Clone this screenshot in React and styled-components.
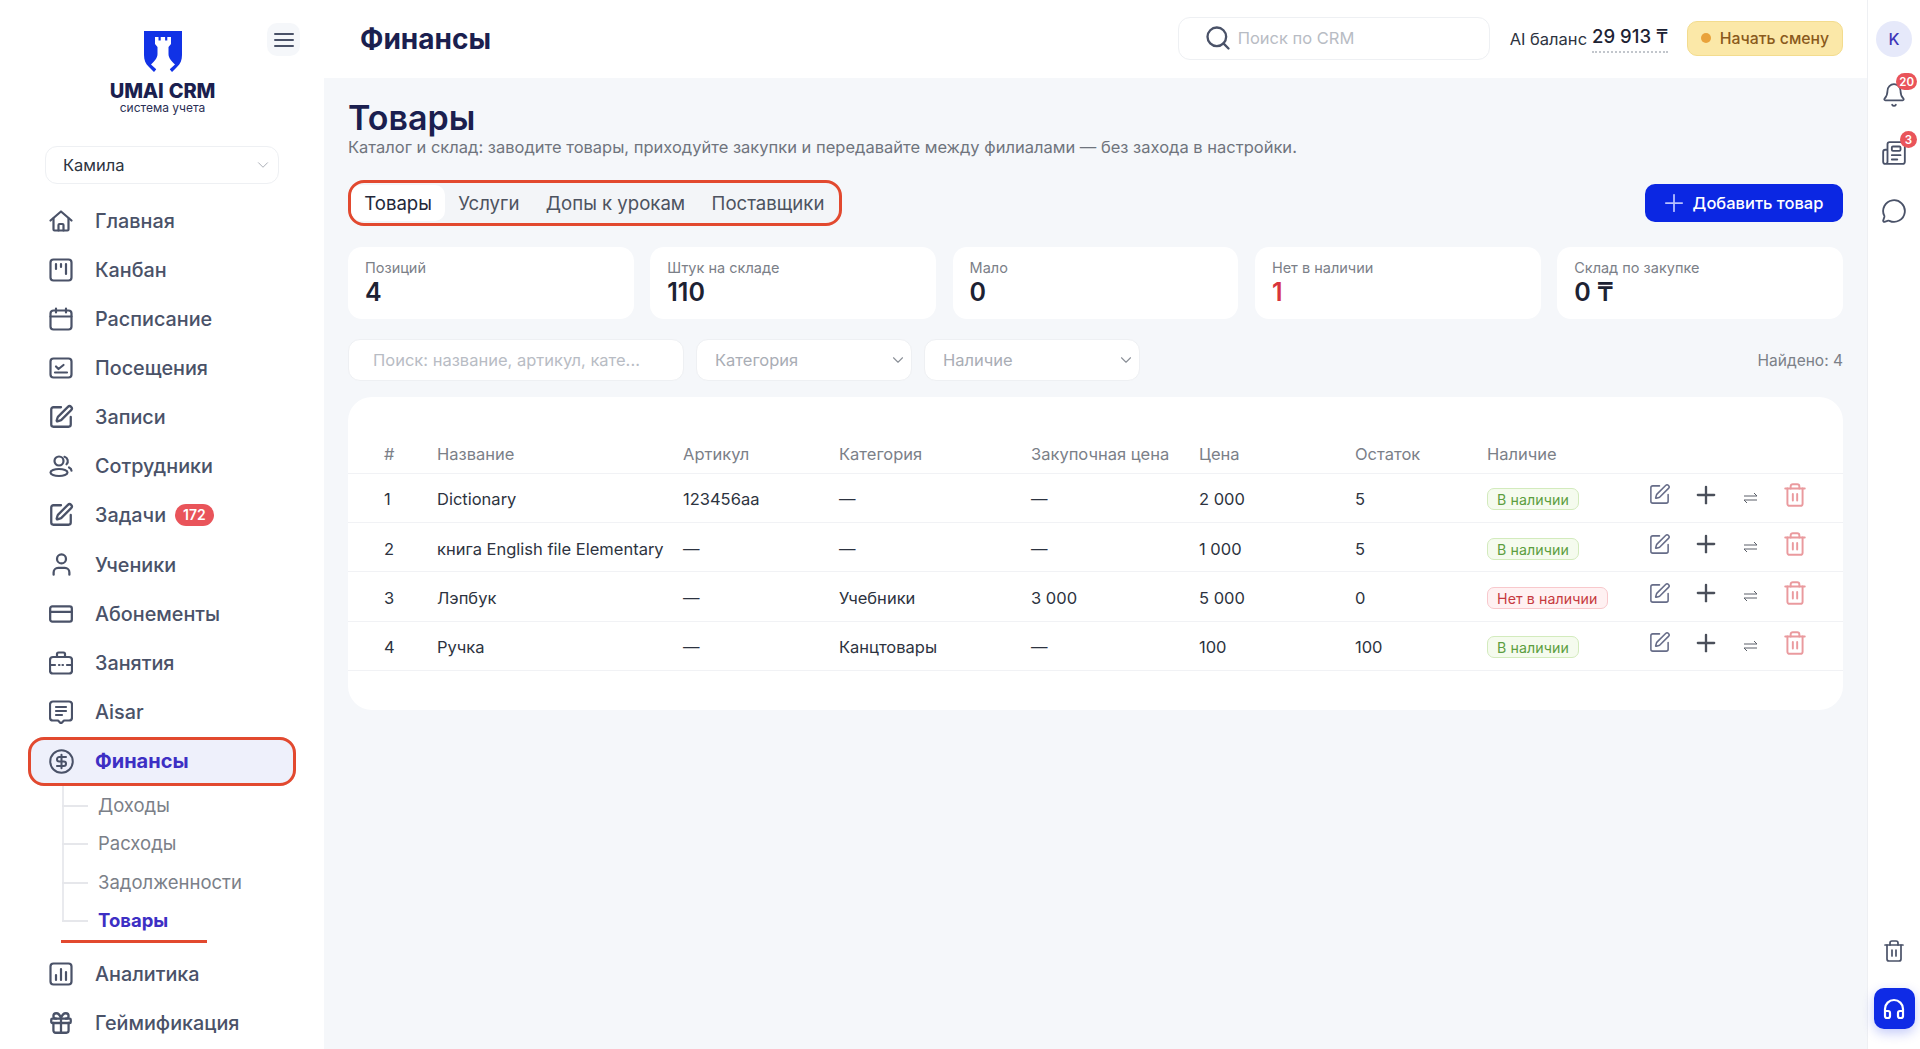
import React from "react";
import styled, { createGlobalStyle } from "styled-components";
import { Gift, User, CreditCard, SquarePen, CircleDollarSign, Bell, Newspaper, MessageCircle, Trash2, Headphones, Plus, Search, ChevronDown } from "lucide-react";

const Global = createGlobalStyle`
  html, body { margin: 0; padding: 0; height: 100%; overflow: hidden; }
  body { font-family: Inter, "Noto Sans", "DejaVu Sans", sans-serif; background: #fff; -webkit-font-smoothing: antialiased; }
  * { box-sizing: border-box; }
`;

const Page = styled.div`display: flex; width: 1920px; height: 1049px; overflow: hidden; background: #fff;`;
const Sidebar = styled.aside`width: 324px; flex: none; background: #fff; padding: 0 28px 0 28px; position: relative; overflow: hidden;`;
const LogoBlock = styled.div`display: flex; flex-direction: column; align-items: center; padding-top: 31px; height: 146px; padding-left: 1px;`;
const LogoName = styled.div`font-size: 20px; font-weight: 800; color: #1b1f4f; line-height: 22px; margin-top: 8px; letter-spacing: -.2px; word-spacing: 1px;`;
const LogoSub = styled.div`font-size: 12px; color: #2b2f55; line-height: 14px; margin-top: -1px;`;
const MenuBtn = styled.button`position: absolute; left: 267px; top: 23px; width: 33px; height: 33px; border: 0; border-radius: 10px; background: #f5f7fa; display: flex; align-items: center; justify-content: center; padding: 0; color: #4a5268;`;
const BranchSelect = styled.div`margin: 0 17px; height: 38px; width: 234px; border: 1px solid #eef0f3; border-radius: 12px; display: flex; align-items: center; justify-content: space-between; padding: 0 6px 0 17px; font-size: 16.5px; color: #2d3340;`;
const Nav = styled.nav`margin-top: 12px;`;
const NavRow = styled.div`
  height: 49.15px; display: flex; align-items: center; gap: 22px; padding-left: 21px;
  font-size: ${p => p.$active ? 20 : 19.8}px; font-weight: ${p => p.$active ? 700 : 500}; color: ${p => p.$active ? "#3d2fc4" : "#4a5268"};
  background: ${p => p.$active ? "#eef0fb" : "transparent"}; border-radius: 16px;
  ${p => p.$active ? "outline: 3px solid #e2492f; outline-offset: -3px;" : ""}
  svg { flex: none; color: #4a5268; }
`;
const IconSlot = styled.span`width: 24px; height: 24px; display: flex; align-items: center; justify-content: center; flex: none;`;
const CountBadge = styled.span`background: #e9545a; color: #fff; font-size: 14px; font-weight: 600; height: 22px; line-height: 22px; border-radius: 11px; padding: 0 8px; margin-left: -13px;`;
const SubList = styled.div`
  position: relative; padding-left: 70px;
  &::before { content: ""; position: absolute; left: 34px; top: 0; bottom: 19px; width: 2px; background: #e9eaee; }
`;
const SubItem = styled.div`
  position: relative; height: 38.5px; display: flex; align-items: center; font-size: 18.5px;
  font-weight: ${p => p.$active ? 700 : 400}; color: ${p => p.$active ? "#3d2fc4" : "#7b8088"};
  &::before { content: ""; position: absolute; left: -36px; top: 50%; width: 26px; height: 2px; background: #e6e7eb; }
`;
const RedLine = styled.div`height: 3px; width: 146px; margin-left: 33px; background: #e2492f; margin-bottom: 7px;`;

const Column = styled.div`flex: 1; min-width: 0; display: flex; flex-direction: column;`;
const Topbar = styled.header`height: 78px; flex: none; background: #fff; display: flex; align-items: center; padding: 0 24px 0 36px;`;
const PageName = styled.div`font-size: 28px; font-weight: 700; color: #1b1f4f; flex: 1;`;
const TopSearch = styled.div`width: 312px; height: 43px; margin-top: -2px; border: 1px solid #eef0f3; border-radius: 12px; display: flex; align-items: center; gap: 6px; padding-left: 25px; font-size: 16.5px; color: #b8bcc4; svg { color: #4a5268; }`;
const Balance = styled.div`margin-left: 20px; display: flex; align-items: center; gap: 5px; font-size: 16.5px; color: #2d3340;`;
const BalanceValue = styled.span`font-size: 18.5px; font-weight: 500; color: #1d2233; border-bottom: 2px dotted #c2c6cc; padding-bottom: 4px; margin-top: -1px;`;
const ShiftBtn = styled.button`margin-left: 19px; margin-top: -2px; width: 156px; height: 35px; background: #fbe8a8; border: 1px solid #f3dc8e; border-radius: 10px; display: flex; align-items: center; justify-content: center; gap: 9px; font: 500 15.8px Inter, sans-serif; color: #8a5a1c;`;
const Dot = styled.span`width: 10px; height: 10px; border-radius: 50%; background: #e9a23b;`;

const Main = styled.main`flex: 1; background: #f5f7fa; padding: 20px 24px 0 24px; overflow: hidden;`;
const Title = styled.h1`margin: 0; font-size: 34px; line-height: 39px; font-weight: 600; color: #1b1f4f;`;
const Subtitle = styled.p`margin: 0; font-size: 16.5px; line-height: 20px; color: #6f747d;`;
const ActionRow = styled.div`display: flex; justify-content: space-between; align-items: center; margin-top: 23px;`;
const Tabs = styled.div`display: flex; align-items: stretch; height: 46px; width: 494px; background: #f3f5f8; border: 3px solid #e2492f; border-radius: 16px; padding: 2px 0; overflow: hidden;`;
const Tab = styled.div`display: flex; align-items: center; padding: 0 13.2px; font-size: 18.6px; white-space: nowrap; border-radius: 10px; color: ${p => p.$active ? "#23283a" : "#4d5360"}; background: ${p => p.$active ? "#fff" : "transparent"};`;
const AddBtn = styled.button`width: 198px; height: 38px; background: #0b27e3; color: #fff; border: 0; border-radius: 10px; font: 500 16.5px Inter, sans-serif; display: flex; align-items: center; justify-content: center; gap: 5px; padding: 0 5px 0 0; svg { color: #b9c2ff; }`;
const Stats = styled.div`display: grid; grid-template-columns: repeat(5, 1fr); gap: 16.5px; margin-top: 21px;`;
const StatCard = styled.div`height: 72px; background: #fff; border-radius: 14px; padding: 12px 17px;`;
const StatLabel = styled.div`font-size: 14.5px; line-height: 17px; color: #7b8088;`;
const StatValue = styled.div`font-size: 25px; line-height: 31px; font-weight: 600; margin-top: 1px; color: ${p => p.$red ? "#d8343c" : "#1d2233"};`;
const Filters = styled.div`display: flex; align-items: center; gap: 12px; margin-top: 20px; height: 42px;`;
const FilterInput = styled.div`width: 336px; height: 42px; background: #fff; border: 1px solid #eef0f3; border-radius: 12px; padding-left: 24px; display: flex; align-items: center; font-size: 16.5px; color: #b8bcc4;`;
const FilterSelect = styled.div`width: 216px; height: 42px; background: #fff; border: 1px solid #eef0f3; border-radius: 12px; padding: 0 4px 0 18px; display: flex; align-items: center; justify-content: space-between; font-size: 16.5px; color: #a9adb5; svg { color: #8b9098; }`;
const Found = styled.div`margin-left: auto; font-size: 15.5px; color: #7b8088;`;
const TableCard = styled.section`margin-top: 16px; height: 313px; background: #fff; border-radius: 24px; padding-top: 37px;`;
const GridRow = styled.div`display: grid; grid-template-columns: 53px 246px 156px 192px 168px 156px 132px 163px 1fr; padding-left: 36px; align-items: center; border-bottom: 1px solid #f1f2f5;`;
const HeadRow = styled(GridRow)`height: 39.5px; padding-top: 1px; font-size: 16.5px; color: #7b8088;`;
const BodyRow = styled(GridRow)`height: 49.4px; padding-top: 3px; font-size: 16.5px; color: #2d3340;`;
const StockBadge = styled.span`
  display: inline-block; height: 22px; line-height: 21px; padding: 0 9px; border-radius: 7px; font-size: 14.2px; letter-spacing: .1px;
  background: ${p => p.$ok ? "#f5fbee" : "#fff1f2"}; color: ${p => p.$ok ? "#5c9e40" : "#c63a40"}; border: 1px solid ${p => p.$ok ? "#d3ebbd" : "#f8c8cc"};
`;
const Actions = styled.div`display: flex; align-items: center; margin-top: -9px; margin-left: -2px;`;
const ActionIcon = styled.span`display: flex; width: ${p => p.$w}px; justify-content: flex-start; color: ${p => p.$c}; ${p => p.$down ? "margin-top: 6px;" : ""}`;

const Rail = styled.aside`width: 53px; flex: none; border-left: 1px solid #eef0f3; background: #fff; display: flex; flex-direction: column; align-items: center; padding-top: 21px; color: #4a5268;`;
const Avatar = styled.div`width: 36px; height: 36px; border-radius: 50%; background: #e6e9fa; color: #3d35b8; display: flex; align-items: center; justify-content: center; font-size: 16px; font-weight: 500;`;
const RailIcon = styled.div`position: relative; height: ${p => p.$h}px; display: flex; align-items: flex-end; margin-top: ${p => p.$m}px;`;
const RailBadge = styled.span`position: absolute; right: ${p => p.$r}px; top: ${p => p.$t}px; min-width: 17px; height: 17px; border-radius: 9px; background: #e9545a; color: #fff; font-size: 11.5px; font-weight: 600; display: flex; align-items: center; justify-content: center; padding: 0 3px;`;
const Spacer = styled.div`flex: 1;`;
const SupportBtn = styled.button`width: 41px; height: 41px; border: 0; border-radius: 10px; background: #0f2be6; color: #fff; box-shadow: 0 4px 12px rgba(15,43,230,.25); display: flex; align-items: center; justify-content: center; padding: 0; margin: 25px 0 20px;`;

const Svg = ({ children, s = 24, w = 2.2 }) => (
  <svg width={s} height={s} viewBox="0 0 24 24" fill="none" stroke="currentColor" strokeWidth={w} strokeLinecap="round" strokeLinejoin="round">{children}</svg>
);
const HomeI = () => <Svg><path d="M1.500 11.500 12 2.500l10.500 9" /><path d="M4.500 9.500v11a1 1 0 0 0 1 1h13a1 1 0 0 0 1-1v-11" /><path d="M9.500 21.500V16a1 1 0 0 1 1-1h3a1 1 0 0 1 1 1v5.500" /></Svg>;
const KanbanI = () => <Svg><rect x="1.5" y="1.5" width="21" height="21" rx="3" /><path d="M7 6v5M12 6v3M17 6v10" /></Svg>;
const CalendarI = () => <Svg><rect x="1.5" y="3.5" width="21" height="19" rx="3" /><path d="M1.5 9.5h21M7 1.5v4M17 1.5v4" /></Svg>;
const AttendI = () => <Svg><rect x="1.5" y="2.5" width="21" height="19" rx="3" /><path d="M6 16.5h12M7 10.5l2.5 2.5 5-4" /></Svg>;
const StaffI = () => <Svg><circle cx="10" cy="7" r="4.5" /><ellipse cx="10" cy="18.5" rx="8.5" ry="3.5" /><path d="M15.5 2.8a4.5 4.5 0 0 1 2 7.5M20 13.5c1.5.8 2.5 2 2.5 3.2" /></Svg>;
const CaseI = () => <Svg><rect x="1" y="6" width="22" height="16.5" rx="3" /><path d="M8 6V3a1.5 1.5 0 0 1 1.5-1.5h5A1.5 1.5 0 0 1 16 3v3M1 14h5M18 14h5M10 14h.5M13.5 14h.5" /></Svg>;
const ChatI = () => <Svg><path d="M4 1.500h16a3 3 0 0 1 3 3v13a3 3 0 0 1-3 3h-5l-3 3-3-3H4a3 3 0 0 1-3-3v-13a3 3 0 0 1 3-3Z" /><path d="M7 7h10M7 11h10M7 15h6" /></Svg>;
const ChartI = () => <Svg><rect x="1.5" y="1.5" width="21" height="21" rx="3" /><path d="M7 18v-5M12 18V7M17 18v-8" /></Svg>;
const SwapI = () => <svg width="15" height="12" viewBox="0 0 15 12" fill="none" stroke="currentColor" strokeWidth="1"><path d="M1 4h13M14 4l-3-3M14 8H1M1 8l3 3" /></svg>;
const Logo = () => (
  <svg width="38" height="41" viewBox="0 0 38 41">
    <path fill="#1132e6" d="M0 0h38v24c0 5-1.5 9-5 12l-5 5-3-3.500-12 0-3 3.500-5-5C1.500 33 0 29 0 24Z" />
    <path fill="#fff" d="M11 6h3.500v3.500h2.200V6h4.400v3.500h2.200V6H27v7l-2.500 3v7c0 4 3 7 6.500 10.500L26 38l-1 3H13l-1-3-5-4.500C10.500 30 13.500 27 13.500 23v-7L11 13Z" />
  </svg>
);

const nav1 = [
  ["Главная", <HomeI />], ["Канбан", <KanbanI />], ["Расписание", <CalendarI />], ["Посещения", <AttendI />],
  ["Записи", <SquarePen size={26} strokeWidth={2.1} />], ["Сотрудники", <StaffI />], ["Задачи", <SquarePen size={26} strokeWidth={2.1} />, "172"],
  ["Ученики", <User size={27} strokeWidth={2} />], ["Абонементы", <CreditCard size={26} strokeWidth={2.1} />], ["Занятия", <CaseI />], ["Aisar", <ChatI />],
];
const subs = ["Доходы", "Расходы", "Задолженности", "Товары"];
const stats = [["Позиций", "4"], ["Штук на складе", "110"], ["Мало", "0"], ["Нет в наличии", "1", true], ["Склад по закупке", "0 ₸"]];
const head = ["#", "Название", "Артикул", "Категория", "Закупочная цена", "Цена", "Остаток", "Наличие", ""];
const rows = [
  ["1", "Dictionary", "123456aa", "—", "—", "2 000", "5", true],
  ["2", "книга English file Elementary", "—", "—", "—", "1 000", "5", true],
  ["3", "Лэпбук", "—", "Учебники", "3 000", "5 000", "0", false],
  ["4", "Ручка", "—", "Канцтовары", "—", "100", "100", true],
];
const tabs = [["Товары", true], ["Услуги"], ["Допы к урокам"], ["Поставщики"]];

function NavItem({ label, icon, count, active }) {
  return (
    <NavRow $active={active}>
      <IconSlot>{icon}</IconSlot>{label}{count && <CountBadge>{count}</CountBadge>}
    </NavRow>
  );
}

export default function App() {
  return (
    <Page>
      <Global />
      <Sidebar>
        <LogoBlock>
          <Logo />
          <LogoName>UMAI CRM</LogoName>
          <LogoSub>система учета</LogoSub>
        </LogoBlock>
        <MenuBtn>
          <svg width="20" height="14" viewBox="0 0 20 14" fill="none" stroke="currentColor" strokeWidth="2" strokeLinecap="round"><path d="M1 1h18M1 7h18M1 13h18" /></svg>
        </MenuBtn>
        <BranchSelect>Камила<ChevronDown size={18} color="#a9adb5" strokeWidth={1.3} /></BranchSelect>
        <Nav>
          {nav1.map(([l, i, c]) => <NavItem key={l} label={l} icon={i} count={c} />)}
          <NavItem active label="Финансы" icon={<CircleDollarSign size={27} strokeWidth={1.8} />} />
          <SubList>
            {subs.map((s, i) => <SubItem key={s} $active={i === 3}>{s}</SubItem>)}
          </SubList>
          <RedLine />
          <NavItem label="Аналитика" icon={<ChartI />} />
          <NavItem label="Геймификация" icon={<Gift size={26} strokeWidth={2.1} />} />
        </Nav>
      </Sidebar>
      <Column>
        <Topbar>
          <PageName>Финансы</PageName>
          <TopSearch><Search size={28} strokeWidth={2} />Поиск по CRM</TopSearch>
          <Balance>AI баланс <BalanceValue>29 913 ₸</BalanceValue></Balance>
          <ShiftBtn><Dot />Начать смену</ShiftBtn>
        </Topbar>
        <Main>
          <Title>Товары</Title>
          <Subtitle>Каталог и склад: заводите товары, приходуйте закупки и передавайте между филиалами — без захода в настройки.</Subtitle>
          <ActionRow>
            <Tabs>{tabs.map(([t, a]) => <Tab key={t} $active={a}>{t}</Tab>)}</Tabs>
            <AddBtn><Plus size={28} strokeWidth={1.5} />Добавить товар</AddBtn>
          </ActionRow>
          <Stats>
            {stats.map(([l, v, r]) => (
              <StatCard key={l}><StatLabel>{l}</StatLabel><StatValue $red={r}>{v}</StatValue></StatCard>
            ))}
          </Stats>
          <Filters>
            <FilterInput>Поиск: название, артикул, кате...</FilterInput>
            <FilterSelect>Категория<ChevronDown size={18} strokeWidth={1.5} /></FilterSelect>
            <FilterSelect>Наличие<ChevronDown size={18} strokeWidth={1.5} /></FilterSelect>
            <Found>Найдено: 4</Found>
          </Filters>
          <TableCard>
            <HeadRow>{head.map((h, i) => <span key={i}>{h}</span>)}</HeadRow>
            {rows.map(r => (
              <BodyRow key={r[0]}>
                <span>{r[0]}</span><span>{r[1]}</span><span>{r[2]}</span><span>{r[3]}</span><span>{r[4]}</span><span>{r[5]}</span><span>{r[6]}</span>
                <span><StockBadge $ok={r[7]}>{r[7] ? "В наличии" : "Нет в наличии"}</StockBadge></span>
                <Actions>
                  <ActionIcon $w={44} $c="#666c88"><SquarePen size={23} strokeWidth={1.6} /></ActionIcon>
                  <ActionIcon $w={51} $c="#4a4f5a"><Plus size={28} strokeWidth={2} /></ActionIcon>
                  <ActionIcon $w={39} $c="#5a5f68" $down><SwapI /></ActionIcon>
                  <ActionIcon $w={26} $c="#ea9a9e"><Trash2 size={26} strokeWidth={1.8} /></ActionIcon>
                </Actions>
              </BodyRow>
            ))}
          </TableCard>
        </Main>
      </Column>
      <Rail>
        <Avatar>K</Avatar>
        <RailIcon $h={36} $m={15}><Bell size={26} strokeWidth={1.6} /><RailBadge $t={1} $r={-10}>20</RailBadge></RailIcon>
        <RailIcon $h={40} $m={18}><Newspaper size={26} strokeWidth={1.7} /><RailBadge $t={5} $r={-10}>3</RailBadge></RailIcon>
        <RailIcon $h={26} $m={32}><MessageCircle size={26} strokeWidth={1.7} /></RailIcon>
        <Spacer />
        <Trash2 size={24} strokeWidth={1.7} />
        <SupportBtn><Headphones size={24} strokeWidth={2.2} /></SupportBtn>
      </Rail>
    </Page>
  );
}
